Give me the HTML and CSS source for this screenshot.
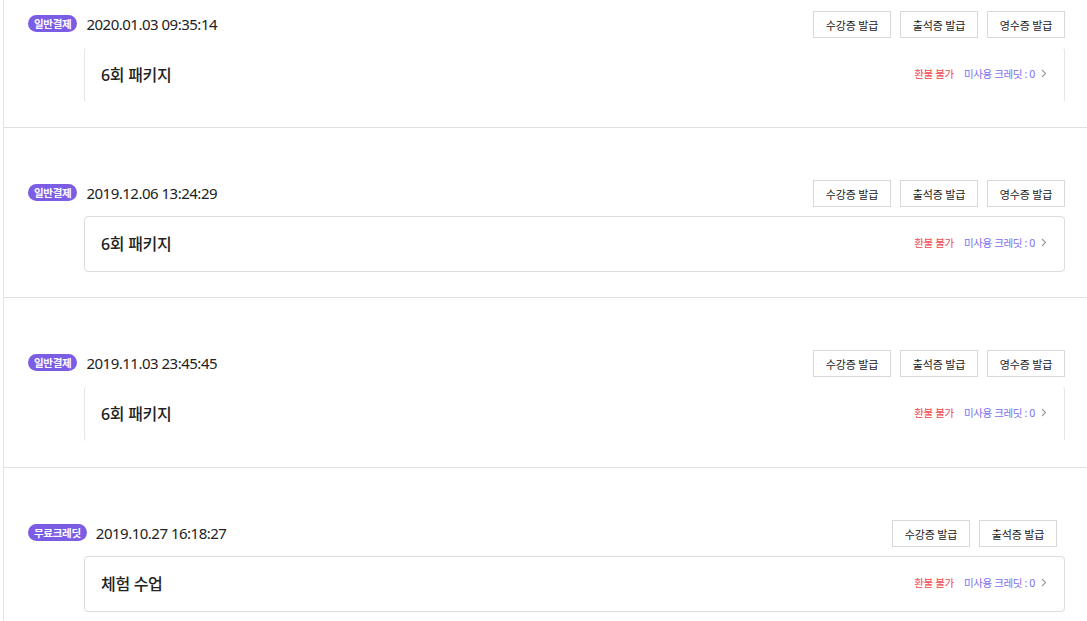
FILE: index.html
```html
<!DOCTYPE html>
<html lang="ko">
<head>
<meta charset="utf-8">
<link rel="stylesheet" href="styles.css">
</head>
<body>
<div class="list">
  <section class="order first">
    <div class="order-head">
      <span class="badge">일반결제</span>
      <span class="date">2020.01.03 09:35:14</span>
      <div class="actions">
        <button class="btn">수강증 발급</button>
        <button class="btn">출석증 발급</button>
        <button class="btn">영수증 발급</button>
      </div>
    </div>
    <div class="card faded">
      <span class="title">6회 패키지</span>
      <div class="meta"><span class="refund">환불 불가</span><span class="credit">미사용 크레딧 : 0</span><svg class="chev" width="6" height="9" viewBox="0 0 6 9"><path d="M1 1l3.5 3.5L1 8" fill="none" stroke="#9a9a9a" stroke-width="1.1"/></svg></div>
    </div>
  </section>
  <section class="order">
    <div class="order-head">
      <span class="badge">일반결제</span>
      <span class="date">2019.12.06 13:24:29</span>
      <div class="actions">
        <button class="btn">수강증 발급</button>
        <button class="btn">출석증 발급</button>
        <button class="btn">영수증 발급</button>
      </div>
    </div>
    <div class="card">
      <span class="title">6회 패키지</span>
      <div class="meta"><span class="refund">환불 불가</span><span class="credit">미사용 크레딧 : 0</span><svg class="chev" width="6" height="9" viewBox="0 0 6 9"><path d="M1 1l3.5 3.5L1 8" fill="none" stroke="#9a9a9a" stroke-width="1.1"/></svg></div>
    </div>
  </section>
  <section class="order">
    <div class="order-head">
      <span class="badge">일반결제</span>
      <span class="date">2019.11.03 23:45:45</span>
      <div class="actions">
        <button class="btn">수강증 발급</button>
        <button class="btn">출석증 발급</button>
        <button class="btn">영수증 발급</button>
      </div>
    </div>
    <div class="card faded">
      <span class="title">6회 패키지</span>
      <div class="meta"><span class="refund">환불 불가</span><span class="credit">미사용 크레딧 : 0</span><svg class="chev" width="6" height="9" viewBox="0 0 6 9"><path d="M1 1l3.5 3.5L1 8" fill="none" stroke="#9a9a9a" stroke-width="1.1"/></svg></div>
    </div>
  </section>
  <section class="order">
    <div class="order-head">
      <span class="badge">무료크레딧</span>
      <span class="date">2019.10.27 16:18:27</span>
      <div class="actions short">
        <button class="btn">수강증 발급</button>
        <button class="btn">출석증 발급</button>
      </div>
    </div>
    <div class="card">
      <span class="title">체험 수업</span>
      <div class="meta"><span class="refund">환불 불가</span><span class="credit">미사용 크레딧 : 0</span><svg class="chev" width="6" height="9" viewBox="0 0 6 9"><path d="M1 1l3.5 3.5L1 8" fill="none" stroke="#9a9a9a" stroke-width="1.1"/></svg></div>
    </div>
  </section>
</div>
</body>
</html>
```

FILE: styles.css
```css
* { box-sizing: border-box; }
html, body { margin: 0; padding: 0; background: #fff; }
body {
  font-family: "Noto Sans", "Noto Sans CJK KR", sans-serif;
  color: #222;
  overflow: hidden;
}
.list {
  margin-left: 3px;
  border-left: 1px solid #e3e3e3;
  min-height: 621px;
}
.order {
  padding: 52px 22px 25px 24px;
  border-bottom: 1px solid #e1e1e1;
}
.order.first { padding-top: 11px; padding-bottom: 24px; }
.order-head {
  display: flex;
  align-items: center;
  height: 27px;
}
.badge {
  display: inline-flex;
  align-items: center;
  height: 17px;
  padding: 0 6px;
  margin-bottom: 2px;
  border-radius: 9px;
  background: #7b5ce5;
  color: #fff;
  font-size: 10.5px;
  font-weight: 700;
  letter-spacing: -0.3px;
}
.date {
  margin-left: 9px;
  margin-bottom: 2px;
  font-size: 15px;
  letter-spacing: -0.5px;
  color: #222;
}
.actions {
  margin-left: auto;
  display: flex;
  gap: 9px;
}
.actions.short { padding-right: 8px; }
.btn {
  width: 78px;
  height: 27px;
  border: 1px solid #d9d9d9;
  background: #fff;
  font-family: inherit;
  font-size: 11px;
  color: #222;
  padding: 0;
  letter-spacing: -0.2px;
}
.card {
  margin: 9px 0 0 56px;
  height: 56px;
  border: 1px solid #dcdcdc;
  border-radius: 4px;
  display: flex;
  align-items: center;
  justify-content: space-between;
  padding: 0 17px 3px 16px;
}
.card.faded {
  border-color: transparent #e6e6e6;
}
.title {
  font-size: 16px;
  font-weight: 500;
  letter-spacing: -0.3px;
}
.meta {
  display: flex;
  align-items: center;
  font-size: 10.5px;
  letter-spacing: -0.35px;
}
.refund { color: #f0454c; }
.credit { color: #7c6ef0; margin-left: 10px; }
.chev { margin-left: 6px; }
```
